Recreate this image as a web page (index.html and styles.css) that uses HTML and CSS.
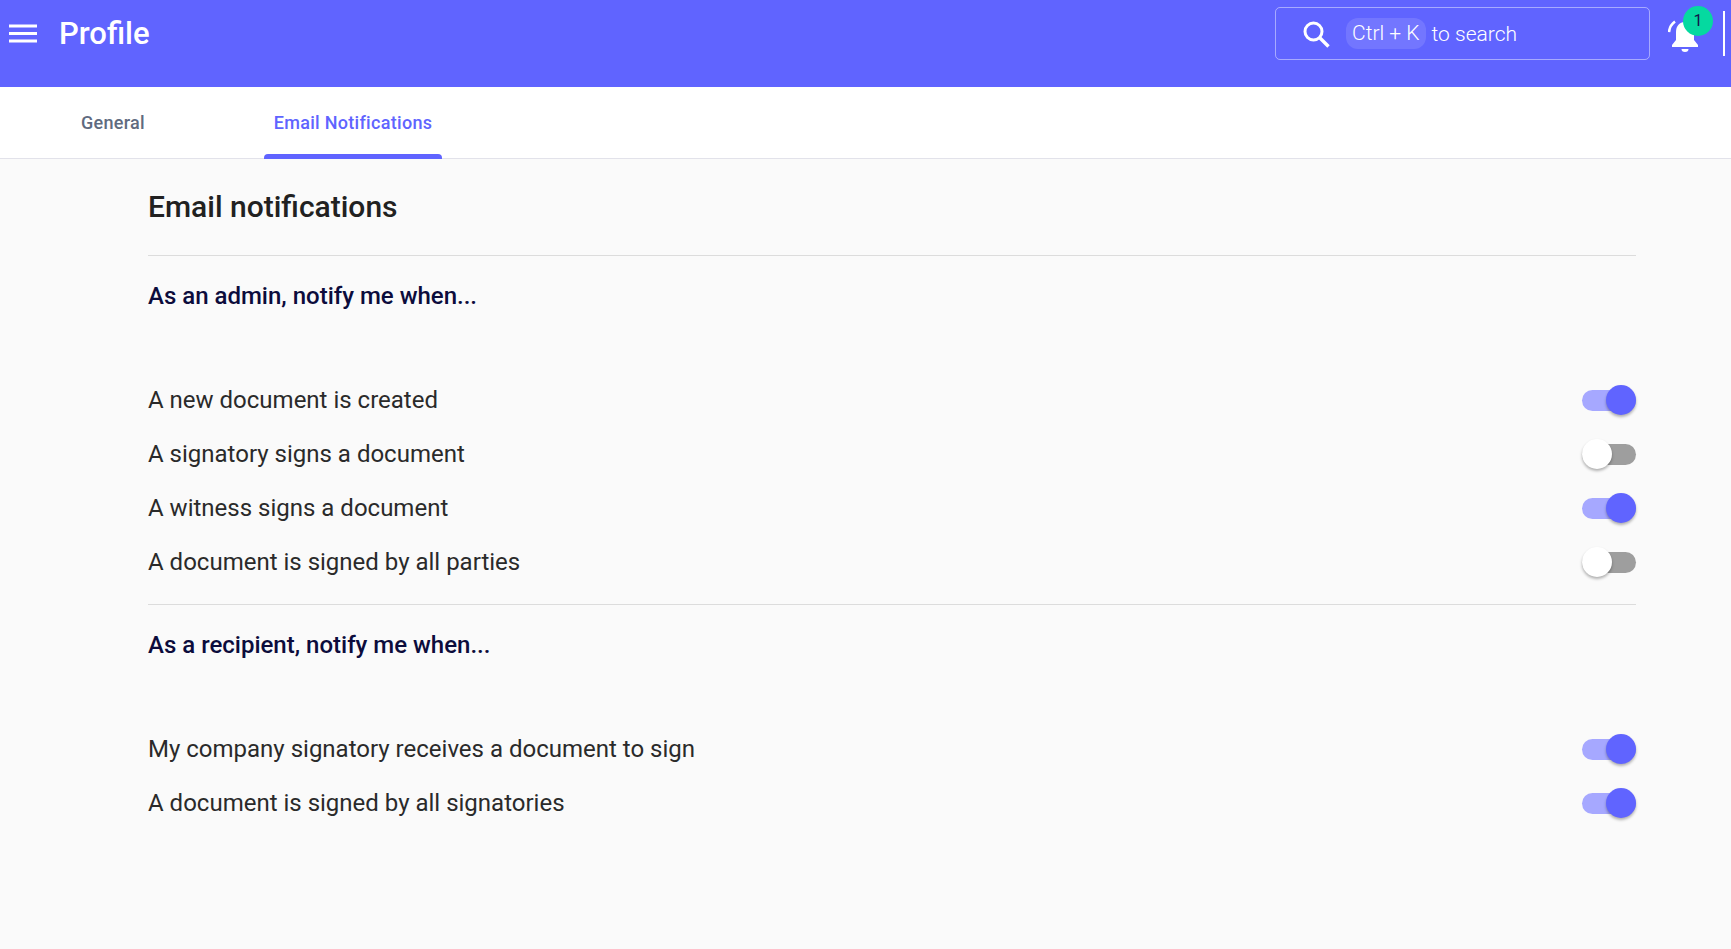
FILE: index.html
```html
<!DOCTYPE html>
<html lang="en">
<head>
<meta charset="utf-8">
<title>Profile</title>
<link rel="stylesheet" href="styles.css">
</head>
<body>
<header class="topbar">
  <div class="topbar-left">
    <svg class="menu-icon" viewBox="0 0 28 19" width="28" height="19"><path d="M0 2h28M0 9.500h28M0 17h28" stroke="#fff" stroke-width="3" fill="none"/></svg>
    <h1 class="page-title">Profile</h1>
  </div>
  <div class="topbar-right">
    <div class="search">
      <svg class="search-icon" viewBox="0 0 28 28" width="28" height="28"><circle cx="11.500" cy="11.500" r="8.500" stroke="#fff" stroke-width="3" fill="none"/><path d="M17.500 17.500L26.500 26.500" stroke="#fff" stroke-width="3.400" fill="none"/></svg>
      <span class="kbd">Ctrl + K</span>
      <span class="search-text">to search</span>
    </div>
    <div class="bell">
      <svg viewBox="0 0 34 36" width="34" height="36"><path d="M17 4c-6 0-9 4.500-9 10v8l-4 5v2h26v-2l-4-5v-8c0-5.500-3-10-9-10z" fill="#fff"/><path d="M13.500 31h7a3.500 3 0 0 1-7 0z" fill="#fff"/><path d="M7 3.500C3.500 6 1.500 9.500 1 14" stroke="#fff" stroke-width="2.600" fill="none"/></svg>
      <span class="badge">1</span>
    </div>
    <div class="divider"></div>
  </div>
</header>
<nav class="tabs">
  <a class="tab tab-general">General</a>
  <a class="tab tab-active">Email Notifications</a>
</nav>
<main class="content">
  <h2 class="title">Email notifications</h2>
  <section class="group">
    <h3 class="group-title">As an admin, notify me when...</h3>
    <div class="rows">
      <div class="row"><span>A new document is created</span><span class="switch on"></span></div>
      <div class="row"><span>A signatory signs a document</span><span class="switch"></span></div>
      <div class="row"><span>A witness signs a document</span><span class="switch on"></span></div>
      <div class="row"><span>A document is signed by all parties</span><span class="switch"></span></div>
    </div>
  </section>
  <section class="group">
    <h3 class="group-title">As a recipient, notify me when...</h3>
    <div class="rows">
      <div class="row"><span>My company signatory receives a document to sign</span><span class="switch on"></span></div>
      <div class="row"><span>A document is signed by all signatories</span><span class="switch on"></span></div>
    </div>
  </section>
</main>
</body>
</html>
```
FILE: styles.css
```css
* { box-sizing: border-box; }
html, body { margin: 0; height: 100%; }
body { background: #fafafa; font-family: Roboto, sans-serif; color: #212121; overflow: hidden; }
.topbar { height: 87px; background: #6064ff; display: flex; justify-content: space-between; align-items: flex-start; padding: 7px 6px 0 9px; }
.topbar-left { display: flex; align-items: center; height: 53px; gap: 22px; }
.menu-icon { display: block; }
.page-title { margin: 0; color: #fff; font-size: 31px; font-weight: 500; line-height: 54px; }
.topbar-right { display: flex; align-items: flex-start; }
.search { width: 375px; height: 53px; border: 1px solid rgba(255,255,255,.45); border-radius: 5px; display: flex; align-items: center; padding-left: 26px; color: #fff; font-size: 21px; font-weight: 300; }
.search-icon { display: block; margin-right: 16px; }
.kbd { background: rgba(255,255,255,.12); border-radius: 12px; height: 31px; line-height: 31px; padding: 0 6px; margin-right: 6px; }
.bell { position: relative; width: 34px; height: 36px; margin: 11px 0 0 18px; }
.bell svg { display: block; }
.badge { position: absolute; top: -12px; left: 15px; width: 30px; height: 30px; border-radius: 50%; background: #05d9a0; color: #14144a; font-size: 16px; font-weight: 400; line-height: 30px; text-align: center; }
.divider { width: 2px; height: 45px; background: #fff; margin: 4px 0 0 21px; }
.tabs { height: 72px; background: #fff; border-bottom: 1px solid #e2e2ea; display: flex; padding-left: 71px; }
.tab { display: block; height: 72px; font-size: 18px; font-weight: 500; letter-spacing: .3px; line-height: 71px; color: #5f6b80; text-align: center; }
.tab-general { width: 84px; margin-right: 109px; }
.tab-active { width: 178px; color: #6064ff; position: relative; }
.tab-active::after { content: ""; position: absolute; left: 0; right: 0; bottom: 0; height: 5px; background: #6064ff; border-radius: 4px 4px 0 0; }
.content { padding: 0 95px 0 148px; }
.title { margin: 0; font-size: 30px; font-weight: 500; line-height: 40px; padding: 28px 0; color: #212121; }
.group { border-top: 1px solid #dcdcdc; padding-top: 25px; padding-bottom: 15px; }
.group-title { margin: 0; font-size: 24px; font-weight: 500; line-height: 30px; color: #0c0c3c; }
.rows { margin-top: 62px; }
.row { height: 54px; display: flex; justify-content: space-between; align-items: center; font-size: 24px; font-weight: 400; color: #2a2a2a; }
.switch { display: block; position: relative; width: 54px; height: 21px; border-radius: 11px; background: #9e9e9e; }
.switch::after { content: ""; position: absolute; top: -5px; left: 0; width: 30px; height: 30px; border-radius: 50%; background: #fff; box-shadow: 0 2px 3px rgba(0,0,0,.3); }
.switch.on { background: #a6a8ff; }
.switch.on::after { left: 24px; background: #6064ff; }
```
